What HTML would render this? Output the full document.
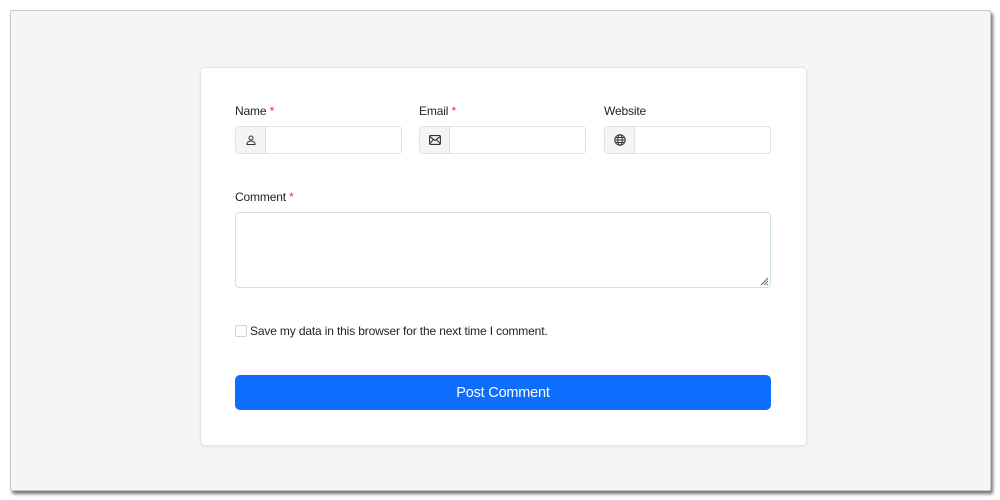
<!DOCTYPE html>
<html><head><style>
body{margin:0;width:1000px;height:500px;background:#fff;font-family:"Liberation Sans",sans-serif;position:relative;overflow:hidden}
.frame{position:absolute;left:10px;top:10px;width:979px;height:479px;background:#f4f6f5;border:1px solid #c8c8c8;box-shadow:2px 3px 3px rgba(0,0,0,.55);border-radius:2px}
.card{position:absolute;left:200px;top:67px;width:605px;height:377px;background:#fff;border:1px solid #e2e5e8;border-radius:5px;box-shadow:0 1px 3px rgba(0,0,0,.06)}
.lbl{position:absolute;font-size:12px;letter-spacing:-0.15px;color:#222}
.lbl i{color:#dc3545;font-style:normal}
.grp{position:absolute;top:126px;height:26px;border:1px solid #dee2e6;border-radius:4px;background:#fff;width:165px}
.ad{position:absolute;left:0;top:0;width:29px;height:26px;background:#f3f4f5;border-right:1px solid #dee2e6;border-radius:4px 0 0 4px;display:flex;align-items:center;justify-content:center}
.ta{position:absolute;left:235px;top:212px;width:534px;height:74px;border:1px solid #cfe2e6;border-radius:4px;background:#fff}
.cb{position:absolute;left:235px;top:325px;width:10px;height:10px;border:1px solid #cfd4d8;border-radius:2px;background:#fff}
.btn{position:absolute;left:235px;top:375px;width:536px;height:35px;background:#0d6efd;border-radius:5px;color:#fff;font-size:14.5px;letter-spacing:-0.2px;text-align:center;line-height:36px}
</style></head><body>
<div class="frame"></div>
<div class="card"></div>
<div class="lbl" style="left:235px;top:104px">Name <i>*</i></div>
<div class="lbl" style="left:419px;top:104px">Email <i>*</i></div>
<div class="lbl" style="left:604px;top:104px">Website</div>
<div class="grp" style="left:235px"><div class="ad"><svg width="10" height="10" viewBox="0 0 10 10" fill="none" stroke="#333" stroke-width="1"><circle cx="5" cy="3" r="2"/><path d="M1 9.5h8C9 7 7 6 5 6S1 7 1 9.5z"/></svg></div></div>
<div class="grp" style="left:419px"><div class="ad"><svg width="12" height="10" viewBox="0 0 12 10" fill="none" stroke="#333" stroke-width="1.1"><rect x="0.6" y="0.6" width="10.8" height="8.8" rx="1"/><path d="M0.6 1.5L6 5.5l5.4-4M0.6 9L4.5 4.5M11.4 9L7.5 4.5"/></svg></div></div>
<div class="grp" style="left:604px"><div class="ad"><svg width="12" height="12" viewBox="0 0 12 12" fill="none" stroke="#333" stroke-width="1"><circle cx="6" cy="6" r="5.2"/><ellipse cx="6" cy="6" rx="2.3" ry="5.2"/><path d="M0.8 6h10.4M1.5 3.5h9M1.5 8.5h9"/></svg></div></div>
<div class="lbl" style="left:235px;top:190px">Comment <i>*</i></div>
<div class="ta"><svg style="position:absolute;right:1px;bottom:1px" width="10" height="10" viewBox="0 0 10 10" stroke="#666"><path d="M9 2L2 9M9 5L5 9M9 8L8 9"/></svg></div>
<div class="cb"></div>
<div class="lbl" style="left:250px;top:324px">Save my data in this browser for the next time I comment.</div>
<div class="btn">Post Comment</div>
</body></html>
